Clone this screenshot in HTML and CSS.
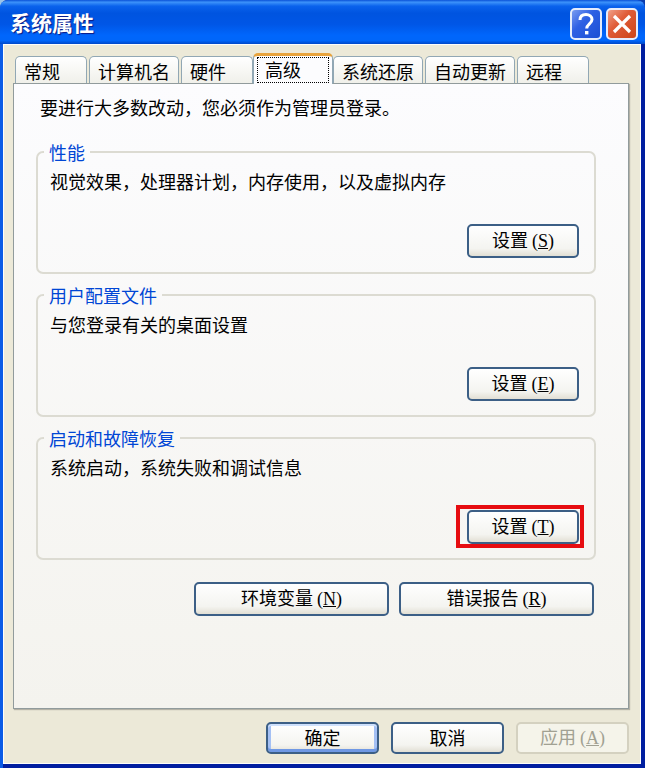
FILE: index.html
```html
<!DOCTYPE html>
<html lang="zh-CN">
<head>
    <meta charset="UTF-8">
    <meta name="viewport" content="width=device-width, initial-scale=1.0">
    <title>系统属性</title>
    <link rel="stylesheet" href="styles.css">
</head>
<body>
    <div class="window">
        <header class="title-bar">
            <h1>系统属性</h1>
            <button type="button" class="caption-btn help-btn" aria-label="帮助">
                <svg viewBox="0 0 28 28" width="28" height="28">
                    <path d="M8 10C8 6.200 10.500 4.500 14 4.500s6 1.800 6 5c0 4.200-5.300 4.400-5.300 9" fill="none" stroke="#fff" stroke-width="3"/>
                    <rect x="13" y="21" width="3.400" height="3.400" fill="#fff"/>
                </svg>
            </button>
            <button type="button" class="caption-btn close-btn" aria-label="关闭">
                <svg viewBox="0 0 28 28" width="28" height="28">
                    <path d="M6 6l16 16M22 6L6 22" fill="none" stroke="#fff" stroke-width="3.200"/>
                </svg>
            </button>
        </header>

        <main class="content">
            <nav class="tabs" role="tablist">
                <button type="button" class="tab" role="tab">常规</button>
                <button type="button" class="tab" role="tab">计算机名</button>
                <button type="button" class="tab" role="tab">硬件</button>
                <button type="button" class="tab active" role="tab" aria-selected="true"><span class="focus">高级</span></button>
                <button type="button" class="tab" role="tab">系统还原</button>
                <button type="button" class="tab" role="tab">自动更新</button>
                <button type="button" class="tab" role="tab">远程</button>
            </nav>

            <section class="panel" role="tabpanel">
                <p class="notice">要进行大多数改动，您必须作为管理员登录。</p>

                <fieldset>
                    <legend>性能</legend>
                    <p>视觉效果，处理器计划，内存使用，以及虚拟内存</p>
                    <div class="actions">
                        <button type="button" class="btn">设置 <span class="key">(<u>S</u>)</span></button>
                    </div>
                </fieldset>

                <fieldset>
                    <legend>用户配置文件</legend>
                    <p>与您登录有关的桌面设置</p>
                    <div class="actions">
                        <button type="button" class="btn">设置 <span class="key">(<u>E</u>)</span></button>
                    </div>
                </fieldset>

                <fieldset>
                    <legend>启动和故障恢复</legend>
                    <p>系统启动，系统失败和调试信息</p>
                    <div class="actions">
                        <div class="marked">
                            <button type="button" class="btn">设置 <span class="key">(<u>T</u>)</span></button>
                        </div>
                    </div>
                </fieldset>

                <div class="wide-actions">
                    <button type="button" class="btn btn-wide">环境变量 <span class="key">(<u>N</u>)</span></button>
                    <button type="button" class="btn btn-wide">错误报告 <span class="key">(<u>R</u>)</span></button>
                </div>
            </section>

            <footer class="footer">
                <button type="submit" class="btn btn-default">确定</button>
                <button type="button" class="btn">取消</button>
                <button type="button" class="btn" disabled>应用 <span class="key">(<u>A</u>)</span></button>
            </footer>
        </main>
    </div>
</body>
</html>
```

FILE: styles.css
```css
* {
    box-sizing: border-box;
}

body {
    margin: 0;
    background: linear-gradient(to right, #9cc4e8 50%, #0a3cae 50%);
    font-family: "Noto Sans CJK SC", sans-serif;
    font-size: 18px;
    line-height: 24px;
    color: #000;
}

p {
    margin: 0;
}

button {
    font: inherit;
    color: inherit;
    cursor: pointer;
}

.window {
    display: flex;
    flex-direction: column;
    min-height: 100vh;
    padding: 0 4px 4px 3px;
    background: linear-gradient(to right, #0a5be6 3px, #001ea0 3px);
    border-radius: 8px 8px 0 0;
    overflow: hidden;
}

/* Title bar */
.title-bar {
    display: flex;
    align-items: center;
    gap: 4px;
    height: 44px;
    margin: 0 -4px 0 -3px;
    padding: 4px 7px 0 10px;
    background: linear-gradient(to bottom, #0a52d8 0, #3c92fa 5%, #0a62ec 14%, #0054e0 30%, #0056e6 55%, #0066fc 80%, #0066fa 92%, #0048c8 100%);
}

.title-bar h1 {
    flex: 1;
    margin: 0;
    padding-bottom: 4px;
    font-size: 21px;
    line-height: 28px;
    font-weight: bold;
    color: #fff;
    text-shadow: 1px 1px 1px #0a1883;
}

.caption-btn {
    width: 32px;
    height: 32px;
    padding: 0;
    border: 2px solid #e4ecfc;
    border-radius: 5px;
}

.caption-btn svg {
    display: block;
}

.help-btn {
    background: linear-gradient(135deg, #7a9cf0, #2e60e4 40%, #1c50d4);
}

.close-btn {
    background: linear-gradient(135deg, #f0a088, #e05c38 40%, #cc4418);
}

/* Window body */
.content {
    flex: 1;
    display: flex;
    flex-direction: column;
    padding: 8px 11px 9px 9px;
    border: 1px solid #fdfdfa;
    background: #ece9d8;
}

.tabs {
    display: flex;
    align-items: flex-end;
    gap: 2px;
    padding-left: 2px;
}

.tab {
    min-width: 72px;
    height: 27px;
    padding: 1px 8px 0;
    border: 1px solid #91a7b4;
    border-bottom: none;
    border-radius: 5px 5px 0 0;
    background: linear-gradient(to bottom, #fff, #f0f0ea);
    text-align: left;
    white-space: nowrap;
}

.tab.active {
    position: relative;
    width: 80px;
    height: 31px;
    margin: 0 -2px -1px;
    padding: 0 3px 1px;
    border-top: 3px solid #e8a33c;
    background: #fcfcfe;
}

.focus {
    display: block;
    height: 26px;
    padding-left: 7px;
    border: 1px dotted #000;
    line-height: 22px;
}

.panel {
    flex: 1;
    padding: 11px 32px 20px 22px;
    border: 1px solid #919b9c;
    box-shadow: 1px 1px 1px #b4b2a6;
    background: linear-gradient(to bottom, #fcfcfe, #f4f3ee);
}

.notice {
    margin: 0 0 21px 4px;
}

fieldset {
    min-width: 0;
    margin: 0 0 9px;
    padding: 5px 15px 14px 12px;
    border: 2px solid #dcdbd2;
    border-radius: 7px;
}

legend {
    margin-left: -6px;
    padding: 0 5px;
    color: #0046d5;
}

.actions {
    display: flex;
    justify-content: flex-end;
    margin-top: 31px;
}

/* Buttons */
.btn {
    width: 112px;
    height: 34px;
    padding: 0 4px 2px;
    border: 2px solid #3c5f86;
    border-radius: 5px;
    background: linear-gradient(to bottom, #fff, #f4f4f0 75%, #e2dfd4);
    white-space: nowrap;
}

.btn-wide {
    width: 195px;
}

.btn-default {
    box-shadow: inset 0 2px 0 #cee0fc, inset 0 -3px 0 #6f98e4, inset 3px 0 0 #a4c0f4, inset -3px 0 0 #a4c0f4;
}

.btn:disabled {
    border-color: #d4d1c0;
    background: #f5f4ea;
    color: #a1a192;
    cursor: default;
}

.key {
    font-family: "Liberation Serif", serif;
}

/* Red frame round the button to press */
.marked {
    position: relative;
}

.marked::after {
    content: "";
    position: absolute;
    inset: -5px -5px -4px -11px;
    border: 4px solid #e60c10;
    pointer-events: none;
}

.wide-actions {
    display: flex;
    justify-content: flex-end;
    gap: 10px;
    margin-top: 22px;
    padding-right: 2px;
}

.footer {
    display: flex;
    justify-content: flex-end;
    gap: 12px;
    margin-top: 13px;
}

.footer .btn {
    width: 113px;
    height: 32px;
}
```
